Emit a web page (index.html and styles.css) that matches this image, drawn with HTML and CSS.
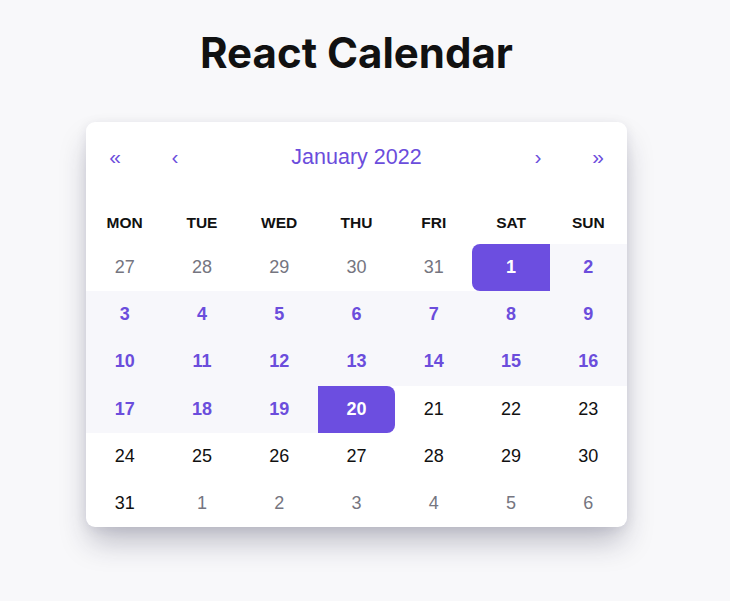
FILE: index.html
```html
<!DOCTYPE html>
<html lang="en">
<head>
<meta charset="utf-8">
<title>React Calendar</title>
<link rel="stylesheet" href="styles.css">
</head>
<body>
<div class="page">
  <h1 class="title">React Calendar</h1>
  <div class="calendar">
    <div class="nav">
      <button class="nav-btn outer">«</button>
      <button class="nav-btn inner">‹</button>
      <button class="nav-label">January 2022</button>
      <button class="nav-btn inner">›</button>
      <button class="nav-btn outer">»</button>
    </div>
    <div class="weekdays">
      <div>MON</div><div>TUE</div><div>WED</div><div>THU</div><div>FRI</div><div>SAT</div><div>SUN</div>
    </div>
    <div class="days">
      <div class="day other">27</div>
      <div class="day other">28</div>
      <div class="day other">29</div>
      <div class="day other">30</div>
      <div class="day other">31</div>
      <div class="day start">1</div>
      <div class="day range">2</div>
      <div class="day range">3</div>
      <div class="day range">4</div>
      <div class="day range">5</div>
      <div class="day range">6</div>
      <div class="day range">7</div>
      <div class="day range">8</div>
      <div class="day range">9</div>
      <div class="day range">10</div>
      <div class="day range">11</div>
      <div class="day range">12</div>
      <div class="day range">13</div>
      <div class="day range">14</div>
      <div class="day range">15</div>
      <div class="day range">16</div>
      <div class="day range">17</div>
      <div class="day range">18</div>
      <div class="day range">19</div>
      <div class="day end">20</div>
      <div class="day">21</div>
      <div class="day">22</div>
      <div class="day">23</div>
      <div class="day">24</div>
      <div class="day">25</div>
      <div class="day">26</div>
      <div class="day">27</div>
      <div class="day">28</div>
      <div class="day">29</div>
      <div class="day">30</div>
      <div class="day">31</div>
      <div class="day other">1</div>
      <div class="day other">2</div>
      <div class="day other">3</div>
      <div class="day other">4</div>
      <div class="day other">5</div>
      <div class="day other">6</div>
    </div>
  </div>
</div>
</body>
</html>
```

FILE: styles.css
```css
html, body {
  margin: 0;
  padding: 0;
  background: #f8f8fa;
}

body {
  font-family: "Liberation Sans", Arial, sans-serif;
  color: #111;
}

.page {
  width: 713px;
  display: flex;
  flex-direction: column;
  align-items: center;
  padding-top: 24px;
  padding-bottom: 60px;
}

.title {
  font-family: Inter, "Liberation Sans", sans-serif;
  font-weight: 700;
  font-size: 42px;
  line-height: 58px;
  margin: 0 0 40px 0;
  color: #111;
  letter-spacing: 0;
}

.calendar {
  width: 541px;
  background: #fff;
  border-radius: 9px;
  box-shadow: 0 18px 30px -4px rgba(30, 30, 60, 0.28), 0 2px 12px rgba(30, 30, 60, 0.08);
  overflow: hidden;
}

.nav {
  display: flex;
  height: 70px;
  align-items: stretch;
}

.nav button {
  border: 0;
  background: transparent;
  font-family: "Liberation Sans", Arial, sans-serif;
  color: #6b4ddc;
  padding: 0;
  cursor: pointer;
}

.nav-btn {
  font-size: 21px;
}

.nav-btn.outer {
  width: 58px;
}

.nav-btn.inner {
  width: 62px;
}

.nav-label {
  flex: 1;
  font-size: 21.5px;
}

.weekdays {
  display: grid;
  grid-template-columns: repeat(7, 1fr);
  height: 52px;
  padding-top: 10px;
  box-sizing: border-box;
}

.weekdays div {
  display: flex;
  align-items: center;
  justify-content: center;
  font-weight: 700;
  font-size: 15.5px;
  color: #111;
}

.days {
  display: grid;
  grid-template-columns: repeat(7, 1fr);
  grid-auto-rows: 47.2px;
}

.day {
  display: flex;
  align-items: center;
  justify-content: center;
  font-size: 18px;
  color: #111;
}

.day.other {
  color: #757580;
}

.day.range {
  background: #f7f7fb;
  color: #6b4ddc;
  font-weight: 700;
}

.day.start,
.day.end {
  background: #6c4ee0;
  color: #fff;
  font-weight: 700;
}

.day.start {
  border-radius: 8px 0 0 8px;
}

.day.end {
  border-radius: 0 8px 8px 0;
}
```
